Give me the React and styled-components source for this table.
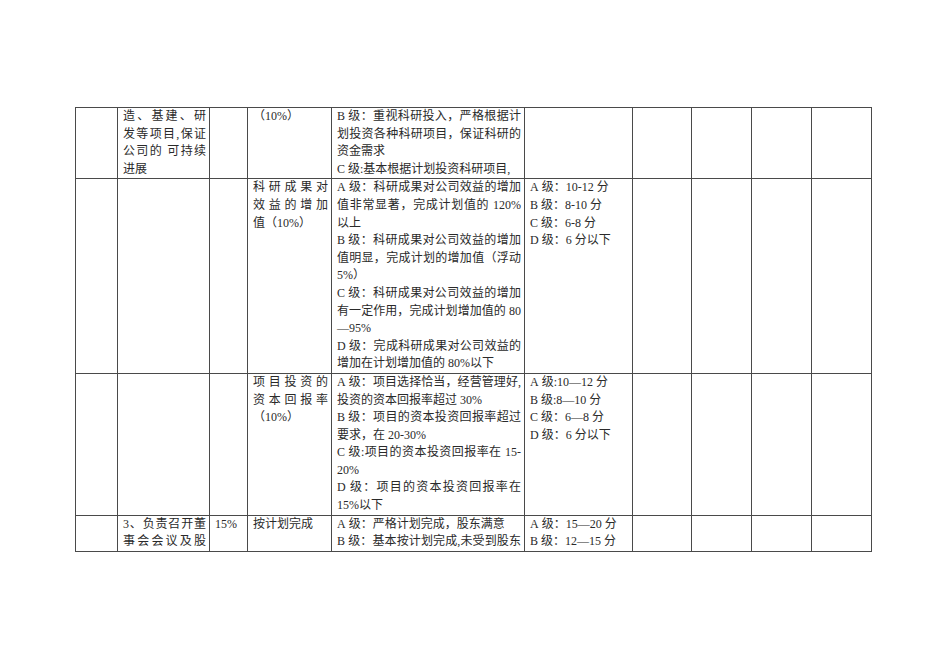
import React from 'react';
import styled, { createGlobalStyle } from 'styled-components';

const GlobalStyle = createGlobalStyle`
  html, body {
    margin: 0;
    padding: 0;
    background: #fff;
  }
`;

const COLS = [42, 92, 38, 84, 193, 108, 59, 60, 60, 60];

// each cell: array of lines, lines starting with "|" are justified to full width
const ROWS = [
  [
    [],
    ['|造、基建、研', '|发等项目,保证', '|公司的 可持续', '进展'],
    [],
    ['（10%）'],
    ['|B 级：重视科研投入，严格根据计', '|划投资各种科研项目，保证科研的', '资金需求', 'C 级:基本根据计划投资科研项目,'],
    [], [], [], [], [],
  ],
  [
    [],
    [],
    [],
    ['|科研成果对', '|效益的增加', '值（10%）'],
    [
      '|A 级：科研成果对公司效益的增加',
      '|值非常显著，完成计划值的 120%',
      '以上',
      '|B 级：科研成果对公司效益的增加',
      '|值明显，完成计划的增加值（浮动',
      '5%）',
      '|C 级：科研成果对公司效益的增加',
      '|有一定作用，完成计划增加值的 80',
      '—95%',
      '|D 级：完成科研成果对公司效益的',
      '增加在计划增加值的 80%以下',
    ],
    ['A 级：10-12 分', 'B 级：8-10 分', 'C 级：6-8 分', 'D 级：6 分以下'],
    [], [], [], [],
  ],
  [
    [],
    [],
    [],
    ['|项目投资的', '|资本回报率', '（10%）'],
    [
      '|A 级：项目选择恰当，经营管理好,',
      '投资的资本回报率超过 30%',
      '|B 级：项目的资本投资回报率超过',
      '要求，在 20-30%',
      '|C 级:项目的资本投资回报率在 15-',
      '20%',
      '|D 级：项目的资本投资回报率在',
      '15%以下',
    ],
    ['A 级:10—12 分', 'B 级:8—10 分', 'C 级：6—8 分', 'D 级：6 分以下'],
    [], [], [], [],
  ],
  [
    [],
    ['|3、负责召开董', '|事会会议及股'],
    ['15%'],
    ['按计划完成'],
    ['A 级：严格计划完成，股东满意', '|B 级：基本按计划完成,未受到股东'],
    ['A 级：15—20 分', 'B 级：12—15 分'],
    [], [], [], [],
  ],
];

const Page = styled.div`
  padding: 107px 0 0 75px;
  font-family: "Liberation Serif", "Noto Sans CJK SC", serif;
  font-size: 12px;
  color: #2a2a2a;
`;

const Grid = styled.div`
  display: grid;
  grid-template-columns: ${COLS.map((w) => `${w}px`).join(' ')};
  width: max-content;
  border-top: 1px solid #4a4a4a;
  border-left: 1px solid #4a4a4a;
`;

const Cell = styled.div`
  box-sizing: border-box;
  border-right: 1px solid #4a4a4a;
  border-bottom: 1px solid #4a4a4a;
  padding: 0 3px 0 5px;
  min-width: 0;
`;

const Line = styled.div`
  line-height: 17.6px;
  white-space: ${(p) => (p.$full ? 'normal' : 'nowrap')};
  word-break: keep-all;
  text-align: ${(p) => (p.$full ? 'justify' : 'left')};
  text-align-last: ${(p) => (p.$full ? 'justify' : 'left')};
`;

const nbsp = (s) => s.replace(/ /g, '\u00a0');

export default function App() {
  return (
    <>
      <GlobalStyle />
      <Page>
        <Grid>
          {ROWS.map((row, r) =>
            row.map((lines, c) => (
              <Cell key={`${r}-${c}`}>
                {lines.map((text, i) => {
                  const full = text.startsWith('|');
                  return (
                    <Line key={i} $full={full}>
                      {nbsp(full ? text.slice(1) : text)}
                    </Line>
                  );
                })}
              </Cell>
            ))
          )}
        </Grid>
      </Page>
    </>
  );
}
